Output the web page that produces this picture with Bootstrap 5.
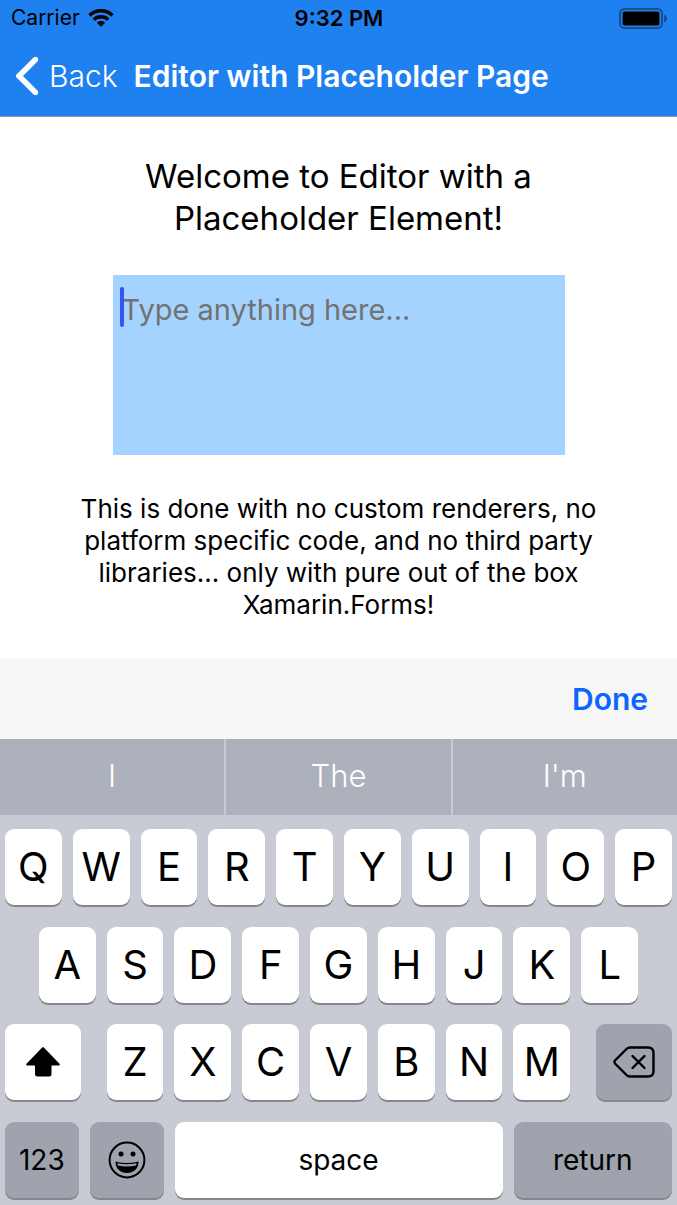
<!DOCTYPE html>
<html lang="en">
<head>
<meta charset="utf-8">
<meta name="viewport" content="width=device-width, initial-scale=1">
<title>Editor with Placeholder Page</title>
<link href="https://cdn.jsdelivr.net/npm/bootstrap@5.3.0/dist/css/bootstrap.min.css" rel="stylesheet">
<style>
  body { font-family: Inter, "Liberation Sans", sans-serif; color: #000; background: #fff; }
  button, textarea { font-family: inherit; }
  .top-area { background: #1f80f0; border-bottom: 1px solid #9a9a9a; }
  .status-bar { height: 36px; font-size: 21px; line-height: 24px; padding: 0 10px 0 11px; }
  .status-time { font-size: 22px; font-weight: 600; }
  .title-bar { height: 80px; padding: 0 16px; gap: 16px; font-size: 30px; line-height: 36px; color: #fff; }
  .back-link { color: #fff; font-weight: 300; gap: 11px; }
  .page-title { font-size: 30px; line-height: 36px; font-weight: 600; }
  .page-body { padding: 38px 72px; }
  .welcome { font-size: 33px; line-height: 42px; font-weight: 400; max-width: 440px; margin-bottom: 36px; }
  .editor-wrap { width: 452px; max-width: 100%; margin-bottom: 38px; }
  .editor-box { height: 180px; padding: 15px 9px; border: 0; border-radius: 0; resize: none; background: #a5d3ff; font-size: 29px; line-height: 40px; }
  .editor-box:focus { background: #a5d3ff; box-shadow: none; }
  .editor-box::placeholder { color: #727272; opacity: 1; }
  .editor-caret { left: 7px; top: 12px; width: 4px; height: 40px; border-radius: 2px; background: #3853f0; pointer-events: none; }
  .about { font-size: 26px; line-height: 32px; max-width: 533px; }
  .accessory { height: 80px; padding: 0 29px; background: #f7f7f7; }
  .done-btn { font-size: 30px; line-height: 36px; font-weight: 600; color: #0a66ff; }
  .predictions { height: 76px; background: #adb1bc; }
  .prediction { border: 0; color: #fff; font-size: 31px; line-height: 40px; font-weight: 300; padding-bottom: 9px; }
  .prediction + .prediction { border-left: 2px solid #c9cbd4; }
  .keyboard { background: #c9cbd4; padding: 14px 5px 7px; }
  .key-row { display: grid; grid-template-columns: repeat(20, minmax(0, 1fr)); column-gap: 11px; height: 76px; }
  .key { --bs-btn-padding-x: 0; --bs-btn-padding-y: 0; grid-column: span 2; display: flex; align-items: center; justify-content: center; min-width: 0; border: 0; border-radius: 9px; background: #fff; color: #000; font-size: 40px; line-height: 48px; box-shadow: 0 2px 0 #85878c; }
  .key-indent { grid-column: 2 / span 2; }
  .key-dark { background: #9ea3ae; }
  .key-word { font-size: 28px; line-height: 36px; }
  .key-edge { grid-column: span 3; width: 84%; }
  .key-span-5 { grid-column: span 5; }
  .key-span-10 { grid-column: span 10; }
  .key-pair { gap: 11px; }
</style>
</head>
<body>
<div class="d-flex flex-column min-vh-100">
  <header class="top-area">
    <div class="status-bar row g-0 align-items-center">
      <div class="col d-flex align-items-center gap-2">
        <span>Carrier</span>
        <svg width="26" height="18" viewBox="0 0 26 18" aria-hidden="true">
          <path d="M13 0C8 0 3.600 1.900.300 5.100l2.500 2.600C5.500 5.100 9 3.600 13 3.600s7.500 1.500 10.200 4.100l2.500-2.600C22.400 1.900 18 0 13 0z"/>
          <path d="M13 6.100c-3.300 0-6.200 1.200-8.400 3.300l2.500 2.500c1.600-1.500 3.600-2.300 5.900-2.300s4.300.8 5.900 2.300l2.500-2.500c-2.200-2.100-5.100-3.300-8.400-3.300z"/>
          <path d="M13 12.100c-1.600 0-3 .6-4.100 1.600L13 17.800l4.100-4.100c-1.100-1-2.500-1.600-4.100-1.600z"/>
        </svg>
      </div>
      <div class="col-auto status-time">9:32 PM</div>
      <div class="col d-flex justify-content-end">
        <svg width="48" height="21" viewBox="0 0 48 21" aria-hidden="true">
          <rect x="1" y="1" width="42" height="19" rx="4.500" fill="none" stroke="#174f91" stroke-width="2"/>
          <rect x="3.600" y="3.600" width="36.800" height="13.800" rx="2"/>
          <path d="M45 6.500c2 .8 3 2.200 3 4s-1 3.200-3 4z" fill="#174f91"/>
        </svg>
      </div>
    </div>
    <nav class="title-bar d-flex align-items-center">
      <a href="#" class="back-link d-flex align-items-center text-decoration-none">
        <svg width="22" height="38" viewBox="0 0 22 38" aria-hidden="true">
          <path d="M19.500 2.500L3 19l16.500 16.500" fill="none" stroke="#fff" stroke-width="5.500" stroke-linecap="round" stroke-linejoin="miter"/>
        </svg>
        <span>Back</span>
      </a>
      <h1 class="page-title mb-0">Editor with Placeholder Page</h1>
    </nav>
  </header>

  <main class="page-body text-center">
    <h2 class="welcome mx-auto">Welcome to Editor with a Placeholder Element!</h2>
    <div class="editor-wrap position-relative mx-auto">
      <textarea class="form-control editor-box" aria-label="Editor" placeholder="Type anything here..."></textarea>
      <span class="editor-caret position-absolute"></span>
    </div>
    <p class="about mx-auto mb-0">This is done with no custom renderers, no platform specific code, and no third party libraries... only with pure out of the box Xamarin.Forms!</p>
  </main>

  <div class="accessory d-flex align-items-center justify-content-end">
    <button type="button" class="btn p-0 border-0 done-btn">Done</button>
  </div>
  <div class="predictions d-flex">
    <button type="button" class="btn rounded-0 col prediction">I</button>
    <button type="button" class="btn rounded-0 col prediction">The</button>
    <button type="button" class="btn rounded-0 col prediction">I'm</button>
  </div>
  <section class="keyboard flex-grow-1 d-flex flex-column justify-content-between" aria-label="Keyboard">
    <div class="key-row">
      <button type="button" class="btn key">Q</button>
      <button type="button" class="btn key">W</button>
      <button type="button" class="btn key">E</button>
      <button type="button" class="btn key">R</button>
      <button type="button" class="btn key">T</button>
      <button type="button" class="btn key">Y</button>
      <button type="button" class="btn key">U</button>
      <button type="button" class="btn key">I</button>
      <button type="button" class="btn key">O</button>
      <button type="button" class="btn key">P</button>
    </div>
    <div class="key-row">
      <button type="button" class="btn key key-indent">A</button>
      <button type="button" class="btn key">S</button>
      <button type="button" class="btn key">D</button>
      <button type="button" class="btn key">F</button>
      <button type="button" class="btn key">G</button>
      <button type="button" class="btn key">H</button>
      <button type="button" class="btn key">J</button>
      <button type="button" class="btn key">K</button>
      <button type="button" class="btn key">L</button>
    </div>
    <div class="key-row">
      <button type="button" class="btn key key-edge" aria-label="Shift">
        <svg width="34" height="30" viewBox="0 0 34 30" aria-hidden="true">
          <path d="M16.200.500q.8-.8 1.600 0L33.500 16.800q.9 1.700-.8 1.700H25.500V27q0 2.500-2.500 2.500H11.500Q9 29.500 9 27V18.500H1.300q-1.700 0-.8-1.700z"/>
        </svg>
      </button>
      <button type="button" class="btn key">Z</button>
      <button type="button" class="btn key">X</button>
      <button type="button" class="btn key">C</button>
      <button type="button" class="btn key">V</button>
      <button type="button" class="btn key">B</button>
      <button type="button" class="btn key">N</button>
      <button type="button" class="btn key">M</button>
      <button type="button" class="btn key key-dark key-edge ms-auto" aria-label="Delete">
        <svg width="42" height="32" viewBox="0 0 42 32" fill="none" stroke="#000" stroke-width="2.400" stroke-linecap="round" stroke-linejoin="round" aria-hidden="true">
          <path d="M17 1.500h18q5.500 0 5.500 5.500v18q0 5.500-5.500 5.500H17q-2 0-3.500-1.500L2 17.500q-1-1.500 0-3L13.500 3q1.500-1.500 3.500-1.500z"/>
          <path d="M19.500 10l12 12M31.500 10l-12 12"/>
        </svg>
      </button>
    </div>
    <div class="key-row">
      <div class="key-pair key-span-5 d-flex">
        <button type="button" class="btn key key-dark key-word col">123</button>
        <button type="button" class="btn key key-dark col" aria-label="Emoji">
          <svg width="38" height="38" viewBox="0 0 38 38" aria-hidden="true">
            <circle cx="19" cy="19" r="17.400" fill="none" stroke="#000" stroke-width="2"/>
            <circle cx="13" cy="13" r="2.500"/>
            <circle cx="25" cy="13" r="2.500"/>
            <path d="M7.500 20.500q11.500 3 23 0C30.500 28 25.500 32 19 32S7.500 28 7.500 20.500z"/>
            <path d="M9.300 22.200q9.700 2.200 19.400 0l-.7 2.300q-9 1.800-18 0z" fill="#9ea3ae"/>
          </svg>
        </button>
      </div>
      <button type="button" class="btn key key-word key-span-10">space</button>
      <button type="button" class="btn key key-dark key-word key-span-5">return</button>
    </div>
  </section>
</div>
<script src="https://cdn.jsdelivr.net/npm/bootstrap@5.3.0/dist/js/bootstrap.bundle.min.js"></script>
</body>
</html>
